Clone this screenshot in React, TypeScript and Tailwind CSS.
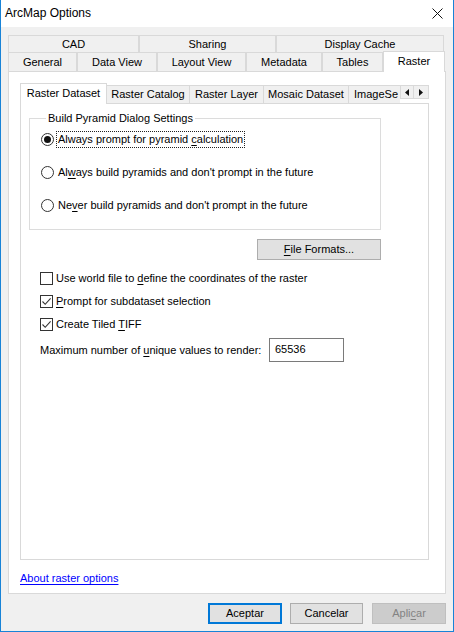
import React from "react";

// Small helpers for the Windows-style controls
const Key = ({ children }: { children: React.ReactNode }) => (
  <span className="underline underline-offset-[2px]">{children}</span>
);

const Radio = ({ checked }: { checked?: boolean }) => (
  <span className="flex size-[13px] shrink-0 items-center justify-center rounded-full border border-[#333333] bg-white">
    {checked && <span className="size-[7px] rounded-full bg-[#111111]" />}
  </span>
);

const Checkbox = ({ checked }: { checked?: boolean }) => (
  <span className="flex size-[13px] shrink-0 items-center justify-center border border-[#333333] bg-white">
    {checked && (
      <svg width="11" height="11" viewBox="0 0 11 11">
        <polyline points="1.5,5.5 4.2,8.3 9.6,2.3" fill="none" stroke="#333333" strokeWidth="1.1" />
      </svg>
    )}
  </span>
);

const OuterTab = ({ label, w }: { label: string; w: string }) => (
  <div className={`${w} flex h-full items-center justify-center whitespace-nowrap border-t border-l border-r border-[#d9d9d9] bg-[#f0f0f0]`}>
    {label}
  </div>
);

const InnerTab = ({ label, w }: { label: string; w: string }) => (
  <div className={`${w} flex h-[18px] shrink-0 items-center justify-center whitespace-nowrap border-t border-r border-[#d9d9d9] bg-[#f0f0f0]`}>
    {label}
  </div>
);

const App = () => {
  return (
    <div className="flex h-[632px] w-[454px] flex-col border-x border-b border-[#1883d7] bg-[#f0f0f0] font-['Liberation_Sans',Arial,sans-serif] text-[11px] leading-[15px] text-black">
      {/* Title bar */}
      <div className="flex h-[27px] shrink-0 items-center justify-between bg-white pl-[4px] pr-[10px]">
        <span className="text-[12px]">ArcMap Options</span>
        <svg width="11" height="11" viewBox="0 0 11 11">
          <path d="M0.5 0.5 L10.5 10.5 M10.5 0.5 L0.5 10.5" stroke="#111111" strokeWidth="1" />
        </svg>
      </div>

      {/* Body */}
      <div className="flex flex-1 flex-col px-[7px] pt-[8px]">
        {/* Outer tabs, back row */}
        <div className="flex h-[17px]">
          <OuterTab label="CAD" w="w-[131px]" />
          <OuterTab label="Sharing" w="w-[137px]" />
          <OuterTab label="Display Cache" w="w-[168px]" />
        </div>
        {/* Outer tabs, front row */}
        <div className="flex h-[19px] items-end">
          <OuterTab label="General" w="w-[69px]" />
          <OuterTab label="Data View" w="w-[80px]" />
          <OuterTab label="Layout View" w="w-[89px]" />
          <OuterTab label="Metadata" w="w-[76px]" />
          <OuterTab label="Tables" w="w-[61px]" />
          <div className="relative z-10 -mb-px flex h-[21px] w-[62px] items-start justify-center border-t border-l border-r border-[#d9d9d9] bg-white pt-[2px]">
            Raster
          </div>
        </div>

        {/* Outer panel */}
        <div className="flex flex-1 flex-col border border-[#d9d9d9] bg-white px-[11px] pt-[11px]">
          {/* Inner tabs */}
          <div className="flex h-[20px] w-[409px] items-end">
            <div className="relative z-10 -mb-px flex h-[21px] w-[87px] shrink-0 items-start justify-center whitespace-nowrap border-t border-l border-r border-[#d9d9d9] bg-white pt-[2px]">
              Raster Dataset
            </div>
            <InnerTab label="Raster Catalog" w="w-[83px]" />
            <InnerTab label="Raster Layer" w="w-[74px]" />
            <InnerTab label="Mosaic Dataset" w="w-[85px]" />
            <div className="flex h-[18px] w-[51px] shrink-0 items-center whitespace-nowrap border-t border-[#d9d9d9] bg-[#f0f0f0] pl-[5px]">
              ImageSe
            </div>
            <div className="mb-[4px] flex h-[14px] w-[29px] shrink-0 self-end">
              <div className="flex w-[14px] items-center justify-center border border-[#d9d9d9] bg-[#f0f0f0]">
                <svg width="4" height="7" viewBox="0 0 4 7">
                  <path d="M4 0 L0 3.5 L4 7 Z" fill="#111111" />
                </svg>
              </div>
              <div className="flex w-[15px] items-center justify-center border-y border-r border-[#d9d9d9] bg-[#f0f0f0]">
                <svg width="4" height="7" viewBox="0 0 4 7">
                  <path d="M0 0 L4 3.5 L0 7 Z" fill="#111111" />
                </svg>
              </div>
            </div>
          </div>

          {/* Inner panel */}
          <div className="flex h-[457px] w-[409px] flex-col border border-[#d9d9d9] bg-white pl-[8px]">
            <fieldset className="mt-[7px] w-[352px] border border-[#dcdcdc] pb-[15px] pl-[11px]">
              <legend className="ml-[5px] px-[2px] leading-[15px]">Build Pyramid Dialog Settings</legend>
              <div className="mt-[5px] flex flex-col gap-[16px]">
                <label className="flex h-[17px] items-center">
                  <Radio checked />
                  <span className="ml-[2px] whitespace-nowrap border border-dotted border-[#222222] px-[1px]">
                    Always prompt for pyramid <Key>c</Key>alculation
                  </span>
                </label>
                <label className="flex h-[17px] items-center">
                  <Radio />
                  <span className="ml-[2px] whitespace-nowrap border border-transparent px-[1px]">
                    Al<Key>w</Key>ays build pyramids and don't prompt in the future
                  </span>
                </label>
                <label className="flex h-[17px] items-center">
                  <Radio />
                  <span className="ml-[2px] whitespace-nowrap border border-transparent px-[1px]">
                    Ne<Key>v</Key>er build pyramids and don't prompt in the future
                  </span>
                </label>
              </div>
            </fieldset>

            <div className="mt-[9px] flex w-[352px] justify-end">
              <button className="h-[21px] w-[124px] border border-[#adadad] bg-[#e1e1e1]">
                <Key>F</Key>ile Formats...
              </button>
            </div>

            <div className="mt-[10px] flex flex-col gap-[6px] pl-[11px]">
              <label className="flex h-[17px] items-center gap-[3px]">
                <Checkbox />
                <span className="whitespace-nowrap">
                  Use world file to <Key>d</Key>efine the coordinates of the raster
                </span>
              </label>
              <label className="flex h-[17px] items-center gap-[3px]">
                <Checkbox checked />
                <span className="whitespace-nowrap">
                  <Key>P</Key>rompt for subdataset selection
                </span>
              </label>
              <label className="flex h-[17px] items-center gap-[3px]">
                <Checkbox checked />
                <span className="whitespace-nowrap">
                  Create Tiled <Key>T</Key>IFF
                </span>
              </label>
            </div>

            <div className="mt-[5px] flex items-center pl-[11px]">
              <span className="w-[229px] shrink-0 whitespace-nowrap">
                Maximum number of <Key>u</Key>nique values to render:
              </span>
              <div className="flex h-[24px] w-[75px] items-start border border-[#7a7a7a] bg-white pl-[5px] pt-[3px]">
                65536
              </div>
            </div>
          </div>

          {/* Help link */}
          <div className="mt-[11px]">
            <a href="#" className="text-[#0000ff] underline underline-offset-[2px]">
              About raster options
            </a>
          </div>
        </div>

        {/* Dialog buttons */}
        <div className="flex justify-end gap-[8px] pt-[9px] pb-[7px]">
          <button className="h-[21px] w-[74px] border-2 border-[#0078d7] bg-[#e1e1e1]">Aceptar</button>
          <button className="h-[21px] w-[73px] border border-[#adadad] bg-[#e1e1e1]">Cancelar</button>
          <button disabled className="ml-[1px] h-[21px] w-[74px] border border-[#bfbfbf] bg-[#cccccc] text-[#838383]">
            Apli<Key>c</Key>ar
          </button>
        </div>
      </div>
    </div>
  );
};

export default App;
